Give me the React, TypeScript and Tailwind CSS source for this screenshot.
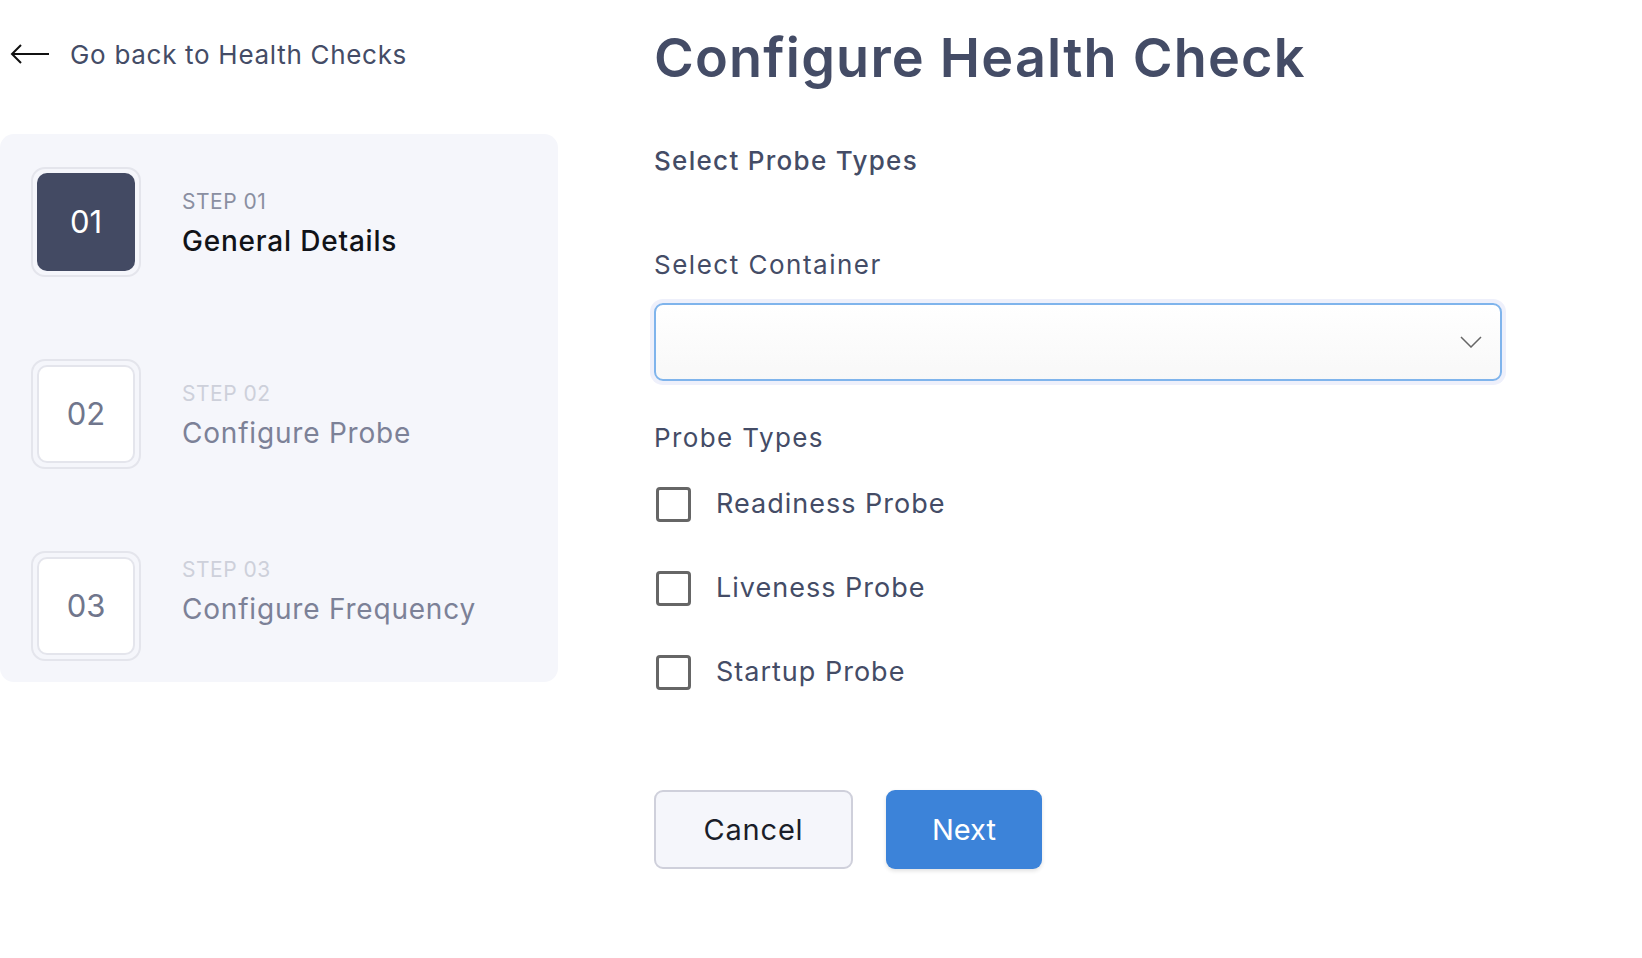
import React from "react";

const font = { fontFamily: "Inter, 'Noto Sans', sans-serif" };

const steps = [
  { num: "01", label: "STEP 01", title: "General Details", active: true, pt: "pt-[21px]" },
  { num: "02", label: "STEP 02", title: "Configure Probe", active: false, pt: "pt-[21px]" },
  { num: "03", label: "STEP 03", title: "Configure Frequency", active: false, pt: "pt-[5px]" },
];

const probes = ["Readiness Probe", "Liveness Probe", "Startup Probe"];

function StepRow({ step }: { step: (typeof steps)[number] }) {
  return (
    <div className="flex items-start">
      <div className="w-[110px] h-[110px] rounded-[14px] border-2 border-[#e4e5ec] p-[4px] shrink-0">
        {step.active ? (
          <div className="w-full h-full rounded-[10px] bg-[#434a63] flex items-center justify-center text-white text-[31px]">
            {step.num}
          </div>
        ) : (
          <div className="w-full h-full rounded-[10px] bg-white border-2 border-[#e4e5ec] flex items-center justify-center text-[#70768c] text-[31px]">
            {step.num}
          </div>
        )}
      </div>
      <div className={"ml-[41px] " + step.pt}>
        <div
          className={
            "text-[21px] leading-[28px] tracking-[0.5px] " +
            (step.active ? "text-[#8a8fa1]" : "text-[#cdd0da]")
          }
        >
          {step.label}
        </div>
        <div
          className={
            "mt-[7px] text-[28px] leading-[36px] tracking-[0.8px] " +
            (step.active ? "text-[#111318] font-medium" : "text-[#7c8197]")
          }
        >
          {step.title}
        </div>
      </div>
    </div>
  );
}

export default function App() {
  return (
    <div className="min-h-screen bg-white flex" style={font}>
      {/* left column */}
      <div className="w-[558px] shrink-0">
        <div className="h-[108px] flex items-center pl-[10px]">
          <svg width="40" height="24" viewBox="0 0 40 24" fill="none" stroke="#111" strokeWidth="2">
            <path d="M39 12H2" />
            <path d="M11 3L2 12L11 21" strokeLinejoin="miter" />
          </svg>
          <span className="ml-[20px] text-[26px] tracking-[0.7px] text-[#444c66]">Go back to Health Checks</span>
        </div>

        <div className="mt-[26px] bg-[#f5f6fb] rounded-[14px] pl-[31px] pt-[33px] pb-[21px] flex flex-col gap-[82px]">
          {steps.map((s) => (
            <StepRow key={s.num} step={s} />
          ))}
        </div>
      </div>

      {/* right column */}
      <div className="ml-[96px] w-[848px] flex flex-col">
        <h1 className="mt-[26px] text-[54px] leading-[64px] font-semibold text-[#444c66] tracking-[1.2px]">
          Configure Health Check
        </h1>

        <div className="mt-[55px] text-[26px] leading-[32px] font-medium tracking-[1.3px] text-[#444c66]">
          Select Probe Types
        </div>

        <div className="mt-[72px] text-[26px] leading-[32px] tracking-[1.5px] text-[#444c66]">
          Select Container
        </div>

        <div className="mt-[22px] h-[78px] rounded-[9px] border-2 border-[#7fb4ec] bg-gradient-to-b from-white to-[#f8f8f8] shadow-[0_0_0_4px_#eef0fb] flex items-center justify-end pr-[18px]">
          <svg width="22" height="12" viewBox="0 0 22 12" fill="none" stroke="#666" strokeWidth="1.5">
            <path d="M1 1L11 11L21 1" />
          </svg>
        </div>

        <div className="mt-[41px] text-[26px] leading-[32px] tracking-[1.4px] text-[#444c66]">Probe Types</div>

        <div className="mt-[8px] flex flex-col">
          {probes.map((p) => (
            <label key={p} className="h-[84px] flex items-center">
              <span className="ml-[2px] w-[35px] h-[35px] rounded-[4px] border-[3px] border-[#666666] bg-white shrink-0" />
              <span className="ml-[25px] text-[27px] tracking-[1px] text-[#444c66]">{p}</span>
            </label>
          ))}
        </div>

        <div className="mt-[76px] flex gap-[33px]">
          <button className="w-[199px] h-[79px] rounded-[9px] border-2 border-[#cfd0db] bg-[#f5f6fb] text-[29px] tracking-[0.8px] text-[#1a1d29]">
            Cancel
          </button>
          <button className="w-[156px] h-[79px] rounded-[9px] bg-[#3c83d9] text-[29px] text-white shadow-[0_2px_4px_rgba(0,0,0,0.12)]">
            Next
          </button>
        </div>
      </div>
    </div>
  );
}
